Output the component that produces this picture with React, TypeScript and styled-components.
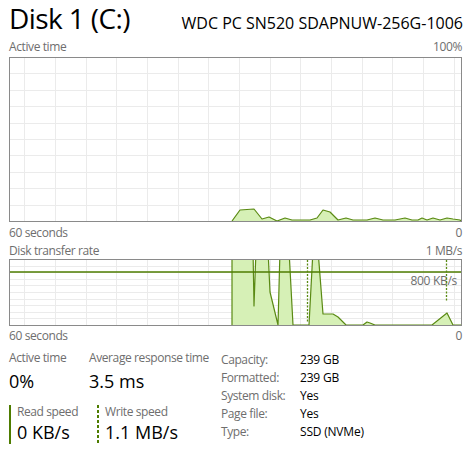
import React from 'react';
import styled, { createGlobalStyle } from 'styled-components';

const GlobalStyle = createGlobalStyle`
  html, body {
    margin: 0;
    padding: 0;
    background: #fff;
  }
  body {
    font-family: "Open Sans", "Noto Sans", sans-serif;
    color: #000;
  }
`;

const LINE = '#5a8a13';
const FILL = '#d6f0b6';
const GRID = '#ebebeb';
const MUTED = '#6e6e6e';

const Page = styled.div`
  width: 472px;
  height: 453px;
  box-sizing: border-box;
  padding: 0 10px 0 9px;
  overflow: hidden;
`;

const Header = styled.div`
  display: flex;
  justify-content: space-between;
  align-items: baseline;
  height: 38px;
`;

const Title = styled.div`
  font-size: 28px;
  line-height: 36px;
  letter-spacing: -0.6px;
`;

const Model = styled.div`
  font-size: 16px;
  margin-right: -1px;
`;

const AxisRow = styled.div<{ $h: number; $pt?: number }>`
  display: flex;
  justify-content: space-between;
  box-sizing: border-box;
  height: ${p => p.$h}px;
  padding-top: ${p => p.$pt ?? 0}px;
  line-height: ${p => p.$h - 1}px;
  font-size: 12px;
  letter-spacing: -0.4px;
  color: ${MUTED};
`;

const Frame = styled.div<{ $h: number }>`
  width: 451px;
  height: ${p => p.$h}px;
  border: 1px solid #8a8a8a;
  svg {
    display: block;
  }
`;

const Stats = styled.div`
  display: grid;
  grid-template-columns: 212px 1fr;
  padding-top: 6px;
`;

const LeftStats = styled.div`
  display: flex;
  flex-direction: column;
`;

const StatRow = styled.div`
  display: flex;
`;

const Stat = styled.div<{ $w: number }>`
  width: ${p => p.$w}px;
`;

const StatLabel = styled.div`
  font-size: 12px;
  line-height: 16px;
  letter-spacing: -0.4px;
  color: ${MUTED};
  white-space: nowrap;
`;

const StatValue = styled.div`
  font-size: 18px;
  line-height: 26px;
  margin-top: 2px;
`;

const SpeedRow = styled.div`
  display: flex;
  margin-top: 11px;
`;

const SpeedBox = styled.div<{ $dashed?: boolean; $w: number }>`
  width: ${p => p.$w}px;
  height: 39px;
  box-sizing: border-box;
  padding-left: 8px;
  background-image: ${p =>
    p.$dashed
      ? 'repeating-linear-gradient(to bottom, #4e7c00 0 3px, transparent 3px 5px)'
      : 'linear-gradient(#4e7c00, #4e7c00)'};
  background-size: 2px 100%;
  background-repeat: no-repeat;
`;

const SpeedLabel = styled.div`
  font-size: 12px;
  line-height: 13px;
  letter-spacing: -0.4px;
  color: ${MUTED};
`;

const SpeedValue = styled.div`
  font-size: 18px;
  line-height: 24px;
  margin-top: 2px;
`;

const Props = styled.div`
  display: grid;
  grid-template-columns: 79px 1fr;
  grid-auto-rows: 18px;
  align-items: center;
  font-size: 12px;
`;

const PropKey = styled.div`
  color: ${MUTED};
  letter-spacing: -0.4px;
`;

const PropVal = styled.div`
  color: #000;
  letter-spacing: -0.2px;
`;

type Pt = [number, number];

const activePts: Pt[] = [
  [232, 221], [240, 210], [254, 209], [262, 219], [269, 217], [277, 221], [285, 218],
  [292, 220], [310, 220], [317, 218], [323, 210], [330, 212], [338, 220], [346, 218],
  [353, 220], [367, 220], [375, 218], [383, 220], [395, 220], [405, 218], [412, 220],
  [418, 220], [422, 218], [427, 220], [433, 218], [440, 220], [447, 218], [453, 219],
  [460, 220], [461, 221],
];

const transferPts: Pt[] = [
  [232, 326], [232, 250], [253, 250], [254, 306], [256, 250], [268, 250], [270, 292],
  [278, 325], [280, 250], [289, 250], [293, 325], [309, 325], [313, 250], [318, 250],
  [323, 314], [333, 314], [338, 317], [346, 325], [363, 325], [367, 322], [370, 323],
  [375, 325], [432, 325], [447, 313], [453, 325], [462, 325],
];

const toStr = (pts: Pt[]) => pts.map(p => p.join(',')).join(' ');

function Grid({ top, bottom }: { top: number; bottom: number }) {
  const xs = Array.from({ length: 15 }, (_, k) => Math.round(24.3 + 30.67 * k) + 0.5);
  const step = (bottom - top) / 10;
  const ys = Array.from({ length: 9 }, (_, k) => Math.round(top + step * (k + 1)) + 0.5);
  return (
    <g stroke={GRID} strokeWidth={1} shapeRendering="crispEdges">
      {xs.map(x => (
        <line key={'x' + x} x1={x} x2={x} y1={top} y2={bottom} />
      ))}
      {ys.map(y => (
        <line key={'y' + y} x1={0} x2={472} y1={y} y2={y} />
      ))}
    </g>
  );
}

function ActiveChart() {
  return (
    <Frame $h={163}>
      <svg width={451} height={163} viewBox="10 58 451 163">
        <Grid top={57} bottom={221} />
        <polygon points={toStr(activePts)} fill={FILL} />
        <polyline points={toStr(activePts)} fill="none" stroke={LINE} strokeWidth={1.2} strokeLinejoin="round" />
      </svg>
    </Frame>
  );
}

function TransferChart() {
  return (
    <Frame $h={65}>
      <svg width={451} height={65} viewBox="10 260 451 65">
        <Grid top={259} bottom={325} />
        <polygon points={toStr(transferPts)} fill={FILL} />
        <polyline points={toStr(transferPts)} fill="none" stroke={LINE} strokeWidth={1.2} strokeLinejoin="round" />
        <line x1={0} x2={472} y1={272} y2={272} stroke="#4e7c00" strokeWidth={1.5} />
        <text
          x={457}
          y={285}
          textAnchor="end"
          fontSize={12}
          letterSpacing={-0.3}
          fill={MUTED}
          fontFamily='"Open Sans", "Noto Sans", sans-serif'
        >
          800 KB/s
        </text>
        <g stroke={LINE} strokeWidth={1.3} strokeDasharray="2 1.5">
          <line x1={307.5} x2={307.5} y1={260} y2={322} />
          <line x1={446.5} x2={446.5} y1={260} y2={302} />
        </g>
      </svg>
    </Frame>
  );
}

const properties: [string, string][] = [
  ['Capacity:', '239 GB'],
  ['Formatted:', '239 GB'],
  ['System disk:', 'Yes'],
  ['Page file:', 'Yes'],
  ['Type:', 'SSD (NVMe)'],
];

export default function App() {
  return (
    <>
      <GlobalStyle />
      <Page>
        <Header>
          <Title>Disk 1 (C:)</Title>
          <Model>WDC PC SN520 SDAPNUW-256G-1006</Model>
        </Header>
        <AxisRow $h={19}>
          <span>Active time</span>
          <span>100%</span>
        </AxisRow>
        <ActiveChart />
        <AxisRow $h={18} $pt={2}>
          <span>60 seconds</span>
          <span>0</span>
        </AxisRow>
        <AxisRow $h={19} $pt={2}>
          <span>Disk transfer rate</span>
          <span>1 MB/s</span>
        </AxisRow>
        <TransferChart />
        <AxisRow $h={18} $pt={1}>
          <span>60 seconds</span>
          <span>0</span>
        </AxisRow>
        <Stats>
          <LeftStats>
            <StatRow>
              <Stat $w={80}>
                <StatLabel>Active time</StatLabel>
                <StatValue>0%</StatValue>
              </Stat>
              <Stat $w={132}>
                <StatLabel>Average response time</StatLabel>
                <StatValue>3.5 ms</StatValue>
              </Stat>
            </StatRow>
            <SpeedRow>
              <SpeedBox $w={88}>
                <SpeedLabel>Read speed</SpeedLabel>
                <SpeedValue>0 KB/s</SpeedValue>
              </SpeedBox>
              <SpeedBox $w={110} $dashed>
                <SpeedLabel>Write speed</SpeedLabel>
                <SpeedValue>1.1 MB/s</SpeedValue>
              </SpeedBox>
            </SpeedRow>
          </LeftStats>
          <Props>
            {properties.map(([k, v]) => (
              <React.Fragment key={k}>
                <PropKey>{k}</PropKey>
                <PropVal>{v}</PropVal>
              </React.Fragment>
            ))}
          </Props>
        </Stats>
      </Page>
    </>
  );
}
